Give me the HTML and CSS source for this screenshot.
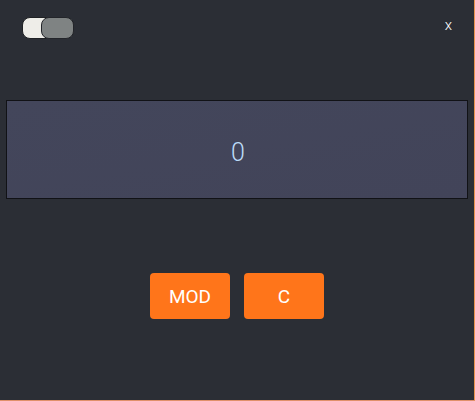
FILE: index.html
```html
<!DOCTYPE html>
<html>
<head>
<meta charset="utf-8">
<link rel="stylesheet" href="styles.css">
</head>
<body>
<div class="app">
  <div class="topbar">
    <div class="toggle"><span class="toggle-knob"></span></div>
    <span class="close">x</span>
  </div>
  <div class="display"><span class="value">0</span></div>
  <div class="buttons">
    <button class="btn">MOD</button>
    <button class="btn">C</button>
  </div>
</div>
</body>
</html>
```
FILE: styles.css
```css
html, body {
  margin: 0;
  padding: 0;
  background: #2b2e35;
}
.app {
  box-sizing: border-box;
  width: 475px;
  height: 401px;
  background: #2b2e35;
  border-right: 1px solid #e8924e;
  border-bottom: 1px solid #e0906a;
  font-family: Roboto, "Liberation Sans", sans-serif;
  display: flex;
  flex-direction: column;
}
.topbar {
  display: flex;
  justify-content: space-between;
  align-items: flex-start;
  padding: 17px 22px 0 22px;
  height: 100px;
  flex-shrink: 0;
  box-sizing: border-box;
}
.toggle {
  display: flex;
  justify-content: flex-end;
  width: 52px;
  height: 22px;
  box-sizing: border-box;
  border: 1px solid #1f2124;
  border-radius: 8px;
  background: #eeede8;
}
.toggle-knob {
  width: 33px;
  margin: -1px -1px -1px 0;
  box-sizing: border-box;
  background: #7f8383;
  border: 1px solid #23252a;
  border-radius: 8px;
}
.close {
  color: #ffffff;
  font-family: Roboto, "Liberation Sans", sans-serif;
  font-weight: 300;
  font-size: 15px;
  line-height: 15px;
  margin-top: 1px;
  margin-right: 0;
}
.display {
  margin: 0 6px;
  height: 99px;
  flex-shrink: 0;
  box-sizing: border-box;
  border: 1px solid #111216;
  background: linear-gradient(170deg, #43465b 0%, #424459 100%);
  display: flex;
  align-items: center;
  justify-content: center;
  padding-top: 5px;
}
.value {
  color: #bcdcf8;
  font-family: Roboto, "Liberation Sans", sans-serif;
  font-weight: 300;
  font-size: 25px;
  margin-left: 2px;
}
.buttons {
  display: flex;
  justify-content: center;
  gap: 14px;
  margin-top: 74px;
}
.btn {
  width: 80px;
  height: 46px;
  border: none;
  border-radius: 4px;
  background: #ff751a;
  color: #ffffff;
  font-family: Roboto, "Liberation Sans", sans-serif;
  font-size: 19px;
  padding: 0;
}
```
